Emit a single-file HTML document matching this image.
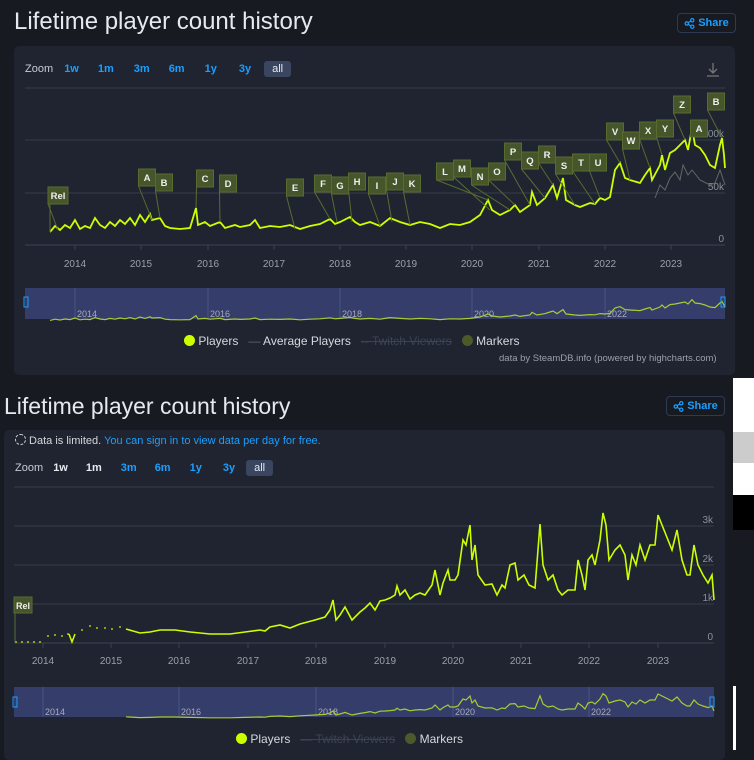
<!DOCTYPE html><html><head><meta charset="utf-8"><style>
body{margin:0;width:754px;height:750px;background:#171a21;overflow:hidden;font-family:"Liberation Sans",sans-serif;position:relative}
.a{position:absolute}
.title{color:#e6e9ee;font-size:24px;white-space:nowrap}
.share{border:1px solid #2c3a52;border-radius:4px;color:#1a9fff;font-weight:bold;font-size:11px;display:flex;align-items:center;justify-content:center;gap:3px;box-sizing:border-box}
.panel{background:#1f2430;border-radius:5px}
.zoom{font-size:11px;color:#c7ccd4;white-space:nowrap}
.zoom b{color:#1a9fff;display:inline-block;font-weight:bold}
.zoom .all{background:#3a4660;color:#e6e9ee;border-radius:3px;padding:2px 8px}
.lbl{font-size:10px;color:#9aa0aa}
.leg{font-size:12px;color:#d5d8dd;white-space:nowrap}
</style></head><body>
<div class="a" style="left:733px;top:378px;width:21px;height:54px;background:#fff"></div>
<div class="a" style="left:733px;top:432px;width:21px;height:31px;background:#ccc"></div>
<div class="a" style="left:733px;top:463px;width:21px;height:32px;background:#fff"></div>
<div class="a" style="left:733px;top:495px;width:21px;height:35px;background:#000"></div>
<div class="a" style="left:733px;top:686px;width:3px;height:64px;background:#fff"></div>

<div class="a title" style="left:14px;top:8px">Lifetime player count history</div>
<div class="a share" style="left:677px;top:13px;width:59px;height:20px"><svg width="11" height="11" viewBox="0 0 12 12" fill="none" stroke="#1a9fff" stroke-width="1.3"><circle cx="9" cy="2.5" r="1.8"/><circle cx="3" cy="6" r="1.8"/><circle cx="9" cy="9.5" r="1.8"/><path d="M4.6 5.1L7.4 3.4M4.6 6.9L7.4 8.6"/></svg>Share</div>
<div class="a panel" style="left:14px;top:46px;width:721px;height:329px"></div>
<div class="a zoom" style="left:25px;top:63px">Zoom <b style="margin-left:8px">1w</b><b style="margin-left:19px">1m</b><b style="margin-left:20px">3m</b><b style="margin-left:19px">6m</b><b style="margin-left:20px">1y</b><b style="margin-left:22px">3y</b><span class="all" style="margin-left:13px">all</span></div>
<svg class="a" style="left:705px;top:62px" width="16" height="16" fill="none" stroke="#777" stroke-width="1.3"><path d="M8 1v10M4 7l4 4 4-4M2 14h12"/></svg>
<svg class="a" id="s1" style="left:0;top:0" width="754" height="380"></svg>
<div class="a leg" style="left:184px;top:334px"><span style="display:inline-block;width:11px;height:11px;border-radius:50%;background:#ccff00;vertical-align:-1px"></span> Players &nbsp; <span style="color:#666">—</span> Average Players &nbsp; <span style="color:#3c4452;text-decoration:line-through">-- Twitch Viewers</span> &nbsp; <span style="display:inline-block;width:11px;height:11px;border-radius:50%;background:#4a5a2a;vertical-align:-1px"></span> Markers</div>
<div class="a" style="left:499px;top:353px;font-size:9.5px;color:#9aa0aa">data by SteamDB.info (powered by highcharts.com)</div>

<div class="a title" style="left:4px;top:393px;font-size:23px">Lifetime player count history</div>
<div class="a share" style="left:666px;top:396px;width:59px;height:20px"><svg width="11" height="11" viewBox="0 0 12 12" fill="none" stroke="#1a9fff" stroke-width="1.3"><circle cx="9" cy="2.5" r="1.8"/><circle cx="3" cy="6" r="1.8"/><circle cx="9" cy="9.5" r="1.8"/><path d="M4.6 5.1L7.4 3.4M4.6 6.9L7.4 8.6"/></svg>Share</div>
<div class="a panel" style="left:4px;top:430px;width:721px;height:330px"></div>
<div class="a" style="left:15px;top:434px;font-size:11px;color:#d5d8dd;white-space:nowrap"><span style="display:inline-block;width:9px;height:9px;border:1px dashed #ccc;border-radius:50%;vertical-align:-1px"></span> Data is limited. <span style="color:#1a9fff">You can sign in to view data per day for free.</span></div>
<div class="a zoom" style="left:15px;top:462px">Zoom <b style="margin-left:7px;color:#e6e9ee">1w</b><b style="margin-left:18px;color:#e6e9ee">1m</b><b style="margin-left:19px">3m</b><b style="margin-left:18px">6m</b><b style="margin-left:19px">1y</b><b style="margin-left:21px">3y</b><span class="all" style="margin-left:11px">all</span></div>
<svg class="a" id="s2" style="left:0;top:0" width="754" height="750"></svg>
<div class="a leg" style="left:236px;top:732px"><span style="display:inline-block;width:11px;height:11px;border-radius:50%;background:#ccff00;vertical-align:-1px"></span> Players &nbsp; <span style="color:#3c4452;text-decoration:line-through">— Twitch Viewers</span> &nbsp; <span style="display:inline-block;width:11px;height:11px;border-radius:50%;background:#4a5a2a;vertical-align:-1px"></span> Markers</div>
<script>
function E(p,t,a,txt){var e=document.createElementNS('http://www.w3.org/2000/svg',t);for(var k in a)e.setAttribute(k,a[k]);if(txt)e.textContent=txt;p.appendChild(e);return e}
var s1=document.getElementById('s1'),s2=document.getElementById('s2');
[88,140,193].forEach(function(y){E(s1,'line',{x1:25,x2:725,y1:y,y2:y,stroke:'#343b48'})});
E(s1,'line',{x1:25,x2:725,y1:245,y2:245,stroke:'#3b4352'});
[['100k',140],['50k',193],['0',245]].forEach(function(v){E(s1,'text',{x:724,y:v[1]-3,'text-anchor':'end','font-size':10,fill:'#8a909a'},v[0])});
var xs=[75,141,208,274,340,406,472,539,605,671];
xs.forEach(function(x,i){E(s1,'line',{x1:x,x2:x,y1:245,y2:250,stroke:'#3b4352'});E(s1,'text',{x:x,y:267,'text-anchor':'middle','font-size':10,fill:'#9aa0aa'},2014+i)});
var p1="50,232 55,226 60,230 65,225 70,228 75,220 80,229 85,226 90,228 95,218 100,225 105,228 110,222 115,226 120,220 125,224 130,218 135,225 140,215 145,222 150,214 152,220 160,218 165,226 170,228 180,229 190,228 196,208 198,225 205,222 210,226 220,222 225,228 235,225 240,227 250,225 255,220 260,228 270,226 280,227 290,225 300,229 310,226 320,224 330,219 335,224 340,222 350,217 355,222 360,225 370,222 380,226 390,218 400,222 410,225 420,222 430,224 440,228 450,224 460,225 470,222 480,215 488,200 492,210 500,215 510,210 515,205 520,212 530,205 532,192 537,205 545,198 550,190 553,185 557,198 563,178 566,200 575,205 580,207 590,203 595,204 600,198 605,200 610,197 615,170 620,163 625,178 630,180 640,183 645,175 650,168 652,180 660,165 662,155 665,170 670,153 675,150 680,145 685,140 688,150 692,128 695,145 700,148 705,155 710,165 715,168 720,145 722,138 724,155 725,168";
E(s1,'polyline',{points:"655,198 660,185 665,190 670,178 675,172 680,180 683,165 688,175 692,170 700,180 710,185 715,183 720,170 725,185",fill:'none',stroke:'#666',"stroke-width":1});
E(s1,'polyline',{points:p1,fill:'none',stroke:'#ccff00',"stroke-width":1.8});
var pts=p1.split(' ').map(function(s){return s.split(',').map(Number)});
function yAt(x){for(var i=1;i<pts.length;i++)if(pts[i][0]>=x)return pts[i][1];return 170}
var M=[['Rel',58,187,0],['A',147,169,152],['B',164,174,160],['C',205,170,196],['D',228,175,220],['E',295,179,295],['F',323,175,330],['G',340,177,337],['H',357,173,352],['I',377,177,380],['J',395,173,392],['K',412,175,410],['L',445,163,488],['M',462,160,490],['N',480,168,510],['O',497,163,515],['P',513,143,530],['Q',530,152,545],['R',547,146,553],['S',564,157,575],['T',581,154,595],['U',598,154,600],['V',615,123,620],['W',631,132,630],['X',648,122,650],['Y',665,120,662],['Z',682,96,685],['A',699,120,692],['B',716,93,722]];
M.forEach(function(m){var w=m[0]=='Rel'?20:17,cx=m[1],t=m[2];var tx=m[3]||cx;E(s1,'line',{x1:cx-w/2,y1:t+17,x2:tx,y2:yAt(tx),stroke:'#5a6b30'});E(s1,'rect',{x:cx-w/2,y:t,width:w,height:17,fill:'#46552a',stroke:'#5a6b30'});E(s1,'text',{x:cx,y:t+12,'text-anchor':'middle','font-size':9.5,'font-weight':'bold',fill:'#eee'},m[0])});
E(s1,'line',{x1:50,x2:50,y1:204,y2:232,stroke:'#5a6b30'});
E(s1,'rect',{x:25,y:288,width:700,height:31,fill:'#353d6a'});
[75,208,340,472,605].forEach(function(x,i){E(s1,'line',{x1:x,x2:x,y1:288,y2:319,stroke:'#4b548a'});E(s1,'text',{x:x+2,y:317,'font-size':9,fill:'#aab'},2014+i*2)});
var nv=pts.map(function(p){return p[0]+','+(288+6+(p[1]-100)*0.2)}).join(' ');
E(s1,'polyline',{points:nv,fill:'none',stroke:'#a8cc33',"stroke-width":1.2});
E(s1,'rect',{x:24,y:297,width:4,height:10,fill:'none',stroke:'#1a9fff'});E(s1,'rect',{x:721,y:297,width:4,height:10,fill:'none',stroke:'#1a9fff'});

[487,526,565,604].forEach(function(y){E(s2,'line',{x1:14,x2:714,y1:y,y2:y,stroke:'#343b48'})});
E(s2,'line',{x1:14,x2:714,y1:643,y2:643,stroke:'#3b4352'});
[['3k',526],['2k',565],['1k',604],['0',643]].forEach(function(v){E(s2,'text',{x:713,y:v[1]-3,'text-anchor':'end','font-size':10,fill:'#8a909a'},v[0])});
var xb=[43,111,179,248,316,385,453,521,589,658];
xb.forEach(function(x,i){E(s2,'line',{x1:x,x2:x,y1:643,y2:648,stroke:'#3b4352'});E(s2,'text',{x:x,y:664,'text-anchor':'middle','font-size':10,fill:'#9aa0aa'},2014+i)});
var p2="126,629 140,633 150,632 160,630 175,630 190,632 210,634 230,634 245,632 260,630 265,631 270,627 280,625 290,628 300,624 315,620 325,617 330,610 333,600 336,620 340,615 345,607 352,620 360,612 365,608 370,603 375,610 380,601 385,600 390,598 395,595 397,586 400,595 405,590 410,599 415,595 420,593 425,595 432,585 435,570 440,595 443,583 448,570 450,580 455,580 458,575 463,540 466,545 470,525 472,560 475,545 478,575 485,585 492,584 497,595 502,585 505,588 510,565 515,563 518,580 524,575 529,585 535,588 540,524 543,565 548,580 553,575 558,590 562,595 568,590 575,590 578,560 582,575 585,590 588,560 592,555 595,565 600,540 603,513 606,525 609,560 615,550 620,545 625,555 628,580 632,555 636,565 640,545 645,560 650,545 655,545 658,515 662,525 668,540 672,550 677,530 682,560 687,575 690,575 694,545 698,565 703,575 708,583 712,575 714,600";
E(s2,'polyline',{points:p2,fill:'none',stroke:'#ccff00',"stroke-width":1.6});
[[16,642],[22,642],[28,642],[34,642],[40,642],[48,636],[55,635],[62,636],[68,634],[72,640],[82,630],[90,626],[97,628],[105,628],[112,629],[120,627]].forEach(function(p){E(s2,'circle',{cx:p[0],cy:p[1],r:0.9,fill:'#ccff00'})});
E(s2,'polyline',{points:"69,634 72,642 75,634",fill:'none',stroke:'#ccff00',"stroke-width":1.5});
E(s2,'line',{x1:15,x2:15,y1:613,y2:642,stroke:'#5a6b30'});
E(s2,'rect',{x:14,y:597,width:18,height:16,fill:'#46552a',stroke:'#5a6b30'});E(s2,'text',{x:23,y:609,'text-anchor':'middle','font-size':9,'font-weight':'bold',fill:'#eee'},'Rel');
E(s2,'rect',{x:14,y:687,width:700,height:30,fill:'#353d6a'});
[43,179,316,453,589].forEach(function(x,i){E(s2,'line',{x1:x,x2:x,y1:687,y2:717,stroke:'#4b548a'});E(s2,'text',{x:x+2,y:715,'font-size':9,fill:'#aab'},2014+i*2)});
var q=p2.split(' ').map(function(s){var a=s.split(',');return a[0]+','+(687+4+(a[1]-500)*0.2)}).join(' ');
E(s2,'polyline',{points:q,fill:'none',stroke:'#a8cc33',"stroke-width":1.2});
E(s2,'rect',{x:13,y:697,width:4,height:10,fill:'none',stroke:'#1a9fff'});E(s2,'rect',{x:710,y:697,width:4,height:10,fill:'none',stroke:'#1a9fff'});
</script>
</body></html>
